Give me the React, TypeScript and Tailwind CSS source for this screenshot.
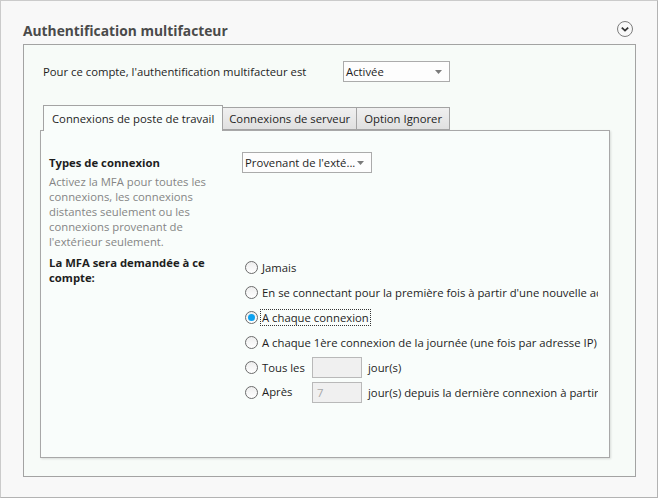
import { useState } from "react";

const font = { fontFamily: '"Open Sans", "Noto Sans", sans-serif' };

function Caret() {
  return (
    <svg width="7" height="4" viewBox="0 0 7 4" className="shrink-0">
      <path d="M0 0 H7 L3.5 4 Z" fill="#7a7a7a" />
    </svg>
  );
}

function Select({ value, width }: { value: string; width: string }) {
  return (
    <div
      className={`${width} h-[21px] border border-[#ababab] bg-[#fdfdfd] flex items-center justify-between pl-[2px] pr-[7px] text-[#1e1e1e] shrink-0`}
    >
      <span className="whitespace-nowrap">{value}</span>
      <Caret />
    </div>
  );
}

function Radio({ checked }: { checked?: boolean }) {
  return (
    <span className="w-[13px] h-[13px] rounded-full border border-[#6b6b6b] bg-gradient-to-b from-[#eeeeee] to-[#ffffff] flex items-center justify-center shrink-0">
      {checked && <span className="w-[7px] h-[7px] rounded-full bg-[#0ea2f0]" />}
    </span>
  );
}

function Input({ value }: { value?: string }) {
  return (
    <div className="w-[50px] h-[21px] border border-[#b9b9b9] bg-[#f0f0f0] text-[#a8a8a8] pl-[4px] flex items-center shrink-0">
      {value}
    </div>
  );
}

export default function App() {
  const [sel, setSel] = useState(2);
  const options = [
    "Jamais",
    "En se connectant pour la première fois à partir d'une nouvelle adresse IP",
    "A chaque connexion",
    "A chaque 1ère connexion de la journée (une fois par adresse IP)",
  ];

  return (
    <div
      style={font}
      className="w-[658px] h-[498px] bg-[#f8f8f8] border border-[#cbcbcb] border-r-[#b3b3b3] border-b-[#b3b3b3] text-[11.3px] leading-[15px] text-[#1e1e1e] overflow-hidden"
    >
      <div className="flex items-center justify-between pl-[22px] pr-[23px] pt-[17px] h-[42px]">
        <h1 className="text-[13.8px] font-bold text-[#4a4a4a]">
          Authentification multifacteur
        </h1>
        <svg width="18" height="18" viewBox="0 0 18 18" className="mb-[3px]">
          <circle cx="9" cy="9" r="7.5" fill="none" stroke="#7d7d7d" strokeWidth="1" />
          <path d="M5.8 7.6 L9 10.6 L12.2 7.6" fill="none" stroke="#333" strokeWidth="1.8" />
        </svg>
      </div>

      <div className="ml-[22px] mt-[1px] w-[613px] h-[433px] border border-[#a3a3a3] bg-[#f7fbf8] pl-[16px]">
        <div className="flex items-center h-[21px] mt-[16px] ml-[3px]">
          <span className="w-[300px]">Pour ce compte, l'authentification multifacteur est</span>
          <Select value="Activée" width="w-[107px]" />
        </div>

        <div className="flex items-end mt-[22px] ml-[3px] h-[26px]">
          <div className="h-[26px] px-[8px] border border-b-0 border-[#a3a3a3] bg-[#f9fdfb] flex items-center relative z-10 -mb-px pb-px">
            Connexions de poste de travail
          </div>
          <div className="h-[23px] px-[6px] border border-l-0 border-[#a3a3a3] bg-gradient-to-b from-[#f0f0f0] to-[#e0e0e0] flex items-center">
            Connexions de serveur
          </div>
          <div className="h-[23px] px-[7px] border border-l-0 border-[#a3a3a3] bg-gradient-to-b from-[#f0f0f0] to-[#e0e0e0] flex items-center">
            Option Ignorer
          </div>
        </div>

        <div className="w-[570px] h-[328px] border border-[#a8a8a8] bg-[#f9fdfb] shadow-[1px_1px_2px_rgba(0,0,0,0.12)] pl-[8px] pt-[21px]">
          <div className="flex">
            <div className="w-[193px] pt-[3px]">
              <div className="font-bold">Types de connexion</div>
              <div className="text-[#858585] mt-[4px]">
                <div>Activez la MFA pour toutes les</div>
                <div>connexions, les connexions</div>
                <div>distantes seulement ou les</div>
                <div>connexions provenant de</div>
                <div>l'extérieur seulement.</div>
              </div>
            </div>
            <Select value="Provenant de l'exté..." width="w-[130px]" />
          </div>

          <div className="flex mt-[6px]">
            <div className="w-[193px] font-bold">
              <div>La MFA sera demandée à ce</div>
              <div>compte:</div>
            </div>
            <div className="w-[356px] overflow-hidden pl-[3px] flex flex-col">
              {options.map((o, i) => (
                <div
                  key={o}
                  onClick={() => setSel(i)}
                  className="flex items-center h-[25px] whitespace-nowrap gap-[4px]"
                >
                  <Radio checked={sel === i} />
                  <span
                    className={
                      sel === i
                        ? "shrink-0 outline outline-1 outline-dotted outline-[#333] px-[1px] -ml-[1px]"
                        : "shrink-0"
                    }
                  >
                    {o}
                  </span>
                </div>
              ))}
              <div className="flex items-center h-[25px] whitespace-nowrap gap-[4px]">
                <Radio />
                <span className="w-[46px] shrink-0">Tous les</span>
                <Input />
                <span className="ml-[2px] shrink-0">jour(s)</span>
              </div>
              <div className="flex items-center h-[25px] whitespace-nowrap gap-[4px]">
                <Radio />
                <span className="w-[46px] shrink-0 -mt-[3px]">Après</span>
                <Input value="7" />
                <span className="ml-[2px] shrink-0">
                  jour(s) depuis la dernière connexion à partir d'une nouvelle adresse IP
                </span>
              </div>
            </div>
          </div>
        </div>
      </div>
    </div>
  );
}
